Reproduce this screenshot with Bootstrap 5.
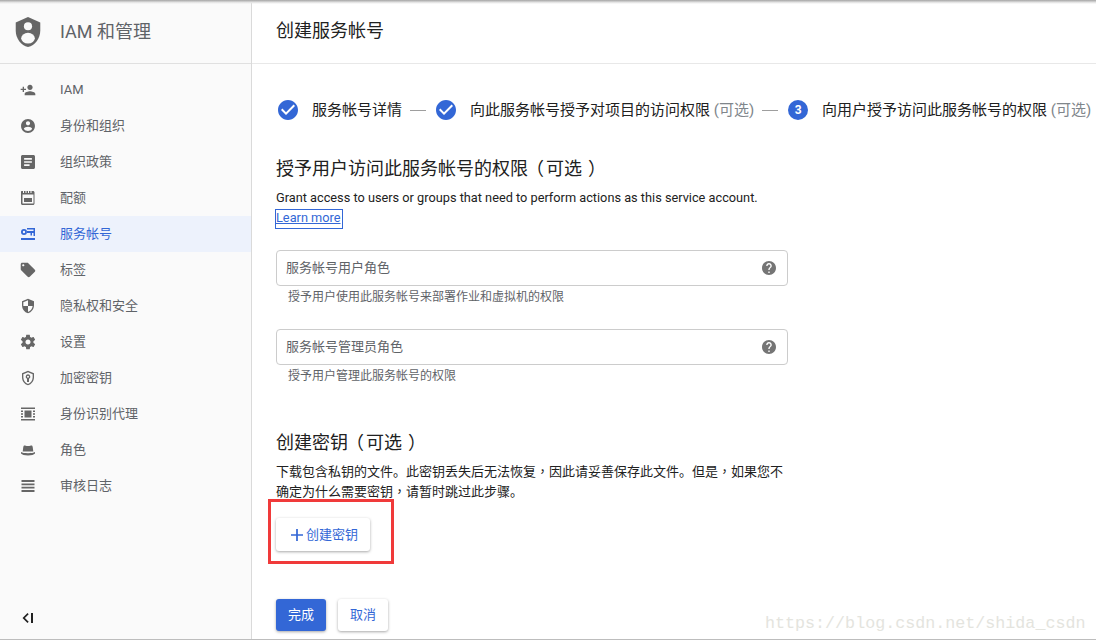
<!DOCTYPE html>
<html lang="zh-CN">
<head>
  <meta charset="UTF-8">
  <title>IAM 和管理</title>
  <link rel="stylesheet" href="https://cdn.jsdelivr.net/npm/bootstrap@5.3.0/dist/css/bootstrap.min.css">
  <style>
    * { font-family: Roboto, "Noto Sans CJK SC", sans-serif; }
    html, body { height: 642px; overflow: hidden; background: #fff; }

    .app-shell { position: relative; height: 640px; border-bottom: 1px solid #bdbdbd; }
    .top-shade { position: absolute; left: 0; right: 0; top: 0; height: 4px; background: linear-gradient(#a4a4a4, #e4e4e4 60%, rgba(255,255,255,0)); }

    /* sidebar */
    .side-panel { width: 252px; background: #fafafa; border-right: 1px solid #dadada; flex-shrink: 0; }
    .side-head { height: 64px; padding-left: 15px; gap: 19px; border-bottom: 1px solid #e0e0e0; color: #5f6368; font-size: 18px; }
    .side-head svg { width: 26px; height: 30px; }
    .side-list { padding-top: 8px; }
    .side-item { height: 36px; padding-left: 20px; gap: 24px; font-size: 13px; color: #5f6368; text-decoration: none; }
    .side-item svg { width: 16px; height: 16px; fill: #666; flex-shrink: 0; }
    .side-item.is-active { background: #edf2fc; color: #3367d6; }
    .side-item.is-active svg { fill: #3367d6; }
    .side-foot { height: 42px; padding-left: 21px; }
    .side-foot svg { width: 14px; height: 14px; }

    /* main column */
    .main-head { height: 64px; padding: 0 24px 3px; border-bottom: 1px solid #e8e8e8; font-size: 18px; color: #212121; }
    .main-body { padding: 33px 24px 0; color: #212121; }

    .step-row { height: 26px; font-size: 15px; color: #212121; white-space: nowrap; padding-left: 2px; }
    .step-row svg { width: 24px; height: 24px; fill: #3367d6; margin: 0 -2px; flex-shrink: 0; }
    .step-label { margin-left: 14px; }
    .step-opt { color: #80868b; }
    .step-dash { width: 16px; height: 1px; background: #9e9e9e; margin: 0 10px 0 8px; flex-shrink: 0; }
    .step-num { width: 20px; height: 20px; border-radius: 50%; background: #3367d6; color: #fff; font-size: 12px; font-weight: 700; flex-shrink: 0; }

    .sect-title { font-size: 18px; font-weight: 400; line-height: 24px; color: #212121; margin: 34px 0 0; }
    .sect-title.is-lower { margin-top: 47px; }
    .paren-l, .paren-r { font-feature-settings: "halt"; }
    .paren-l { margin: 0 2px 0 7px; }
    .paren-r { margin-left: 6px; }
    .sect-text { font-size: 13px; line-height: 20px; margin: 7px 0 0; color: #212121; width: 512px; }
    .sect-text.is-latin { font-size: 12.75px; }
    .punct-mid { font-family: "Noto Sans CJK TC", sans-serif; line-height: 0; }
    .learn-link { display: block; width: fit-content; font-size: 12.75px; line-height: 16px; color: #3367d6; padding: 0 1px 2px 0; margin-top: 2px; outline: 1px solid #3367d6; }

    .role-field { width: 512px; height: 36px; border: 1px solid #ccc; border-radius: 4px; padding: 0 11px 0 9px; font-size: 13px; color: #5f6368; }
    .role-field svg { width: 14px; height: 14px; fill: #757575; }
    .role-field.is-first { margin-top: 22px; }
    .role-field.is-second { margin-top: 24px; }
    .field-hint { font-size: 12px; line-height: 16px; color: #5f6368; padding-left: 12px; margin-top: 3px; }

    .key-btn, .act-btn { font-size: 13px; border: 0; border-radius: 3px; box-shadow: 0 1px 3px rgba(0,0,0,.35); background: #fff; color: #3367d6; padding: 0; }
    .key-btn { width: 94px; height: 33px; gap: 3px; margin-top: 16px; padding-left: 3px; }
    .key-btn svg { width: 12px; height: 12px; fill: #3367d6; }
    .act-btn { width: 50px; height: 32px; }
    .act-btn.is-primary { background: #3367d6; color: #fff; }
    .finish-row { margin-top: 48px; column-gap: 12px; }

    /* overlays from the annotated screenshot */
    .red-box { position: absolute; left: 268px; top: 499px; width: 126px; height: 65px; border: 3px solid #f03a3a; pointer-events: none; }
    .wm-text { position: absolute; left: 765px; top: 613px; font-family: "Liberation Mono", monospace; font-size: 16.7px; line-height: 22px; color: #e4e4de; white-space: nowrap; }
  </style>
</head>
<body>
  <div class="app-shell d-flex">

    <!-- Sidebar -->
    <aside class="side-panel d-flex flex-column">
      <div class="side-head d-flex align-items-center">
        <svg viewBox="3 1 18 22"><path fill="#666" d="M12 1L3 5v6c0 5.55 3.84 10.74 9 12 5.16-1.260 9-6.450 9-12V5l-9-4z"/><circle cx="12" cy="7.800" r="3" fill="#fafafa"/><ellipse cx="12" cy="16.500" rx="5" ry="3.900" fill="#fafafa"/></svg>
        <span>IAM 和管理</span>
      </div>
      <nav class="side-list flex-grow-1">
        <a class="side-item d-flex align-items-center" href="#"><svg viewBox="0 0 24 24"><path d="M15 12c2.210 0 4-1.790 4-4s-1.790-4-4-4-4 1.790-4 4 1.790 4 4 4zm-9-2V7H4v3H1v2h3v3h2v-3h3v-2H6zm9 4c-2.670 0-8 1.340-8 4v2h16v-2c0-2.660-5.330-4-8-4z"/></svg>IAM</a>
        <a class="side-item d-flex align-items-center" href="#"><svg viewBox="0.500 0.500 23 23"><path d="M12 2C6.480 2 2 6.480 2 12s4.480 10 10 10 10-4.480 10-10S17.520 2 12 2zm0 3c1.660 0 3 1.340 3 3s-1.340 3-3 3-3-1.340-3-3 1.340-3 3-3zm0 14.200c-2.500 0-4.710-1.280-6-3.220.03-1.990 4-3.080 6-3.080 1.990 0 5.970 1.090 6 3.080-1.290 1.940-3.500 3.220-6 3.220z"/></svg>身份和组织</a>
        <a class="side-item d-flex align-items-center" href="#"><svg viewBox="1.700 1.700 20.600 20.600"><path d="M19 3H5c-1.100 0-2 .9-2 2v14c0 1.100.9 2 2 2h14c1.100 0 2-.9 2-2V5c0-1.100-.9-2-2-2zm-5 14H7v-2h7v2zm3-4H7v-2h10v2zm0-4H7V7h10v2z"/></svg>组织政策</a>
        <a class="side-item d-flex align-items-center" href="#"><svg viewBox="0 0 16 16"><path d="M1.500 1H3v2h1V1h1.500v2h1V1H8v2h1V1h1.500v2h1V1h1.500c.8 0 1.500.7 1.500 1.500v11c0 .8-.7 1.500-1.500 1.500H2.500C1.700 15 1 14.300 1 13.500V1.500zM2.500 4.500v9h11v-9h-11zM4 8h8v4H4z"/></svg>配额</a>
        <a class="side-item is-active d-flex align-items-center" href="#"><svg viewBox="0 0 16 16"><path fill-rule="evenodd" d="M4 3a3 3 0 1 1-.001 6.001A3 3 0 0 1 4 3zm0 1.800a1.200 1.200 0 1 0 0 2.400 1.200 1.200 0 0 0 0-2.400zM7 2h8v8h-1.500V7H12v2.500h-1.500V7H6.800V5h6.700V3.500H7zM1 12h14v2H1z"/></svg>服务帐号</a>
        <a class="side-item d-flex align-items-center" href="#"><svg viewBox="1 1 22 22"><path d="M21.410 11.580l-9-9C12.050 2.220 11.550 2 11 2H4c-1.100 0-2 .9-2 2v7c0 .55.22 1.050.59 1.420l9 9c.36.36.86.58 1.410.58.55 0 1.050-.22 1.410-.59l7-7c.37-.36.59-.86.59-1.410 0-.55-.23-1.060-.59-1.420zM5.500 7C4.670 7 4 6.330 4 5.500S4.670 4 5.500 4 7 4.670 7 5.500 6.330 7 5.500 7z"/></svg>标签</a>
        <a class="side-item d-flex align-items-center" href="#"><svg viewBox="0 0 24 24"><path d="M12 1L3 5v6c0 5.550 3.840 10.740 9 12 5.160-1.260 9-6.450 9-12V5l-9-4zm0 10.990h7c-.53 4.120-3.280 7.790-7 8.940V12H5V6.300l7-3.110v8.800z"/></svg>隐私权和安全</a>
        <a class="side-item d-flex align-items-center" href="#"><svg viewBox="1 1 22 22"><path d="M19.430 12.980c.04-.32.07-.64.07-.98s-.03-.66-.07-.98l2.110-1.650c.19-.15.24-.42.12-.64l-2-3.460c-.12-.22-.39-.3-.61-.22l-2.490 1c-.52-.4-1.080-.73-1.690-.98l-.38-2.650C14.460 2.180 14.250 2 14 2h-4c-.25 0-.46.18-.49.42l-.38 2.650c-.61.25-1.170.59-1.690.98l-2.490-1c-.23-.09-.49 0-.61.22l-2 3.460c-.13.22-.07.49.12.64l2.110 1.650c-.04.32-.07.65-.07.98s.03.66.07.98l-2.110 1.650c-.19.15-.24.42-.12.64l2 3.460c.12.22.39.3.61.22l2.490-1c.52.4 1.080.73 1.690.98l.38 2.650c.03.24.24.42.49.42h4c.25 0 .46-.18.49-.42l.38-2.650c.61-.25 1.170-.59 1.690-.98l2.490 1c.23.09.49 0 .61-.22l2-3.460c.12-.22.07-.49-.12-.64l-2.110-1.650zM12 15.500c-1.930 0-3.500-1.570-3.500-3.500s1.570-3.500 3.500-3.500 3.500 1.570 3.500 3.500-1.570 3.500-3.500 3.500z"/></svg>设置</a>
        <a class="side-item d-flex align-items-center" href="#"><svg viewBox="0 0 24 24"><path fill-rule="evenodd" d="M12 1L3 5v6c0 5.550 3.840 10.740 9 12 5.160-1.260 9-6.450 9-12V5l-9-4zm0 2.200l7 3.100V11c0 4.500-3 8.700-7 9.900-4-1.200-7-5.400-7-9.900V6.300l7-3.100zM12 6.500a3.500 3.500 0 0 0-1.500 6.660V18h3v-4.840A3.500 3.500 0 0 0 12 6.500zm0 2a1.500 1.500 0 1 1 0 3 1.500 1.500 0 0 1 0-3z"/></svg>加密密钥</a>
        <a class="side-item d-flex align-items-center" href="#"><svg viewBox="0 0 16 16"><path d="M1 1.500h14V3H1zM1 13h14v1.500H1zM1 4.500h2v1.500H1zM13 4.500h2v1.500h-2zM1 10h2v1.500H1zM13 10h2v1.500h-2zM1 7.250h2v1.500H1zM13 7.250h2v1.500h-2zM4.500 4.500h7v7h-7z"/></svg>身份识别代理</a>
        <a class="side-item d-flex align-items-center" href="#"><svg viewBox="0 0 16 16"><path d="M4.500 3.500c.8 0 1.500.5 3.500.5s2.700-.5 3.500-.5c.8 0 1 .6 1.200 1.500l.6 4.500H2.700l.6-4.500c.2-.9.400-1.500 1.200-1.500zM1 10c1.500.8 3.500 1.200 7 1.200s5.500-.4 7-1.200v1.500c-1 1.300-3.500 2-7 2s-6-.7-7-2z"/></svg>角色</a>
        <a class="side-item d-flex align-items-center" href="#"><svg viewBox="0 0 16 16"><path d="M1.500 2h13v2h-13zM1.500 5.500h13v1.800h-13zM1.500 8.800h13v1.800h-13zM1.500 12h13v2h-13z"/></svg>审核日志</a>
      </nav>
      <div class="side-foot d-flex align-items-center">
        <svg viewBox="0 0 14 14"><path d="M6.500 2L1.500 7l5 5 1.200-1.200L3.900 7l3.800-3.800zM10 2h2v10h-2z" fill="#212121"/></svg>
      </div>
    </aside>

    <!-- Main -->
    <main class="flex-grow-1 overflow-hidden">
      <div class="main-head d-flex align-items-center">创建服务帐号</div>
      <div class="main-body">

        <div class="step-row d-flex align-items-center">
          <svg viewBox="0 0 24 24"><path d="M12 2C6.480 2 2 6.480 2 12s4.480 10 10 10 10-4.480 10-10S17.520 2 12 2zm-2 15l-5-5 1.410-1.410L10 14.170l7.590-7.590L19 8l-9 9z"/></svg>
          <span class="step-label">服务帐号详情</span>
          <span class="step-dash"></span>
          <svg viewBox="0 0 24 24"><path d="M12 2C6.480 2 2 6.480 2 12s4.480 10 10 10 10-4.480 10-10S17.520 2 12 2zm-2 15l-5-5 1.410-1.410L10 14.170l7.590-7.590L19 8l-9 9z"/></svg>
          <span class="step-label">向此服务帐号授予对项目的访问权限 <span class="step-opt">(可选)</span></span>
          <span class="step-dash"></span>
          <span class="step-num d-flex align-items-center justify-content-center">3</span>
          <span class="step-label">向用户授予访问此服务帐号的权限 <span class="step-opt">(可选)</span></span>
        </div>

        <h2 class="sect-title">授予用户访问此服务帐号的权限<span class="paren-l">（</span>可选<span class="paren-r">）</span></h2>
        <p class="sect-text is-latin">Grant access to users or groups that need to perform actions as this service account.</p>
        <a class="learn-link" href="#">Learn more</a>

        <div class="role-field is-first d-flex align-items-center justify-content-between">
          <span>服务帐号用户角色</span>
          <svg viewBox="2 2 20 20"><path d="M12 2C6.480 2 2 6.480 2 12s4.480 10 10 10 10-4.480 10-10S17.520 2 12 2zm1 17h-2v-2h2v2zm2.070-7.750l-.9.920C13.450 12.900 13 13.500 13 15h-2v-.5c0-1.100.450-2.100 1.170-2.830l1.240-1.260c.370-.360.590-.860.590-1.410 0-1.100-.9-2-2-2s-2 .9-2 2H8c0-2.210 1.790-4 4-4s4 1.790 4 4c0 .880-.360 1.680-.930 2.250z"/></svg>
        </div>
        <div class="field-hint">授予用户使用此服务帐号来部署作业和虚拟机的权限</div>

        <div class="role-field is-second d-flex align-items-center justify-content-between">
          <span>服务帐号管理员角色</span>
          <svg viewBox="2 2 20 20"><path d="M12 2C6.480 2 2 6.480 2 12s4.480 10 10 10 10-4.480 10-10S17.520 2 12 2zm1 17h-2v-2h2v2zm2.070-7.750l-.9.920C13.450 12.900 13 13.500 13 15h-2v-.5c0-1.100.450-2.100 1.170-2.830l1.240-1.260c.370-.360.590-.860.590-1.410 0-1.100-.9-2-2-2s-2 .9-2 2H8c0-2.210 1.790-4 4-4s4 1.790 4 4c0 .880-.360 1.680-.930 2.250z"/></svg>
        </div>
        <div class="field-hint">授予用户管理此服务帐号的权限</div>

        <h2 class="sect-title is-lower">创建密钥<span class="paren-l">（</span>可选<span class="paren-r">）</span></h2>
        <p class="sect-text">下载包含私钥的文件。此密钥丢失后无法恢复<span class="punct-mid" lang="zh-TW">，</span>因此请妥善保存此文件。但是<span class="punct-mid" lang="zh-TW">，</span>如果您不<br>确定为什么需要密钥<span class="punct-mid" lang="zh-TW">，</span>请暂时跳过此步骤。</p>
        <button class="key-btn d-flex align-items-center justify-content-center" type="button">
          <svg viewBox="5 5 14 14"><path d="M19 13h-6v6h-2v-6H5v-2h6V5h2v6h6v2z"/></svg>创建密钥
        </button>

        <div class="d-flex finish-row">
          <button class="act-btn is-primary" type="button">完成</button>
          <button class="act-btn" type="button">取消</button>
        </div>
      </div>
    </main>

    <div class="top-shade"></div>
    <div class="red-box"></div>
    <div class="wm-text">https://blog.csdn.net/shida_csdn</div>
  </div>
  <script src="https://cdn.jsdelivr.net/npm/bootstrap@5.3.0/dist/js/bootstrap.bundle.min.js"></script>
</body>
</html>
